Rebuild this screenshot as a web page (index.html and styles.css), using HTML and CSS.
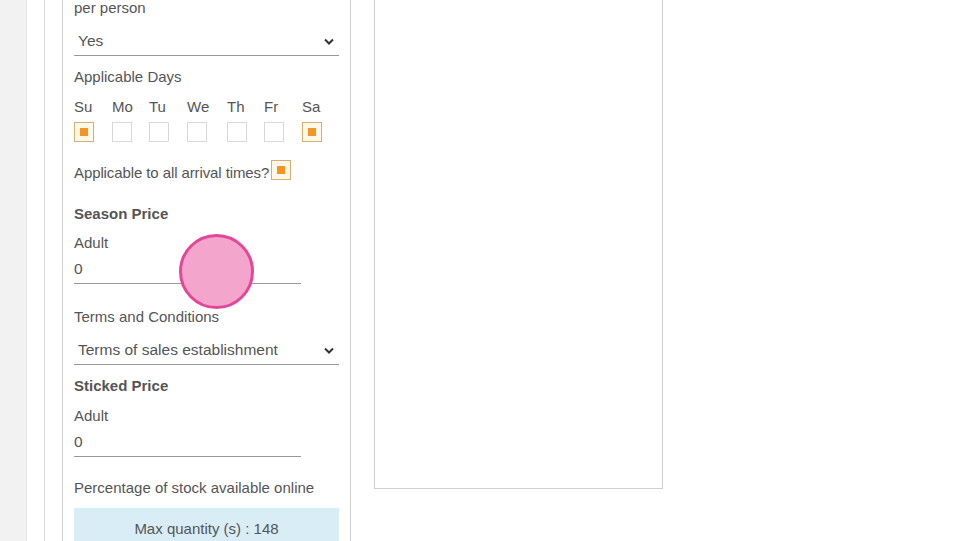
FILE: index.html
```html
<!DOCTYPE html>
<html lang="en">
<head>
    <meta charset="UTF-8" />
    <title>Season price</title>
    <link rel="stylesheet" href="styles.css">
</head>
<body>
    <div class="rail"></div>
    <div class="main">
        <div class="panel">
            <div class="field">
                <label class="lbl">per person</label>
                <div class="select">
                    <span>Yes</span>
                    <svg class="chev" width="10" height="7" viewBox="0 0 10 7"><path d="M1 1.5 L5 5.5 L9 1.5" fill="none" stroke="#333" stroke-width="2"/></svg>
                </div>
            </div>

            <div class="field">
                <label class="lbl lbl-days">Applicable Days</label>
                <div class="days">
                    <span class="day">Su</span>
                    <span class="day">Mo</span>
                    <span class="day">Tu</span>
                    <span class="day">We</span>
                    <span class="day">Th</span>
                    <span class="day">Fr</span>
                    <span class="day">Sa</span>
                    <span class="box checked"></span>
                    <span class="box"></span>
                    <span class="box"></span>
                    <span class="box"></span>
                    <span class="box"></span>
                    <span class="box"></span>
                    <span class="box checked"></span>
                </div>
            </div>

            <div class="arrival">
                <span>Applicable to all arrival times?</span>
                <span class="box checked"></span>
            </div>

            <h4 class="title">Season Price</h4>
            <div class="field">
                <label class="lbl">Adult</label>
                <div class="input">0</div>
            </div>

            <div class="field">
                <label class="lbl">Terms and Conditions</label>
                <div class="select">
                    <span>Terms of sales establishment</span>
                    <svg class="chev" width="10" height="7" viewBox="0 0 10 7"><path d="M1 1.5 L5 5.5 L9 1.5" fill="none" stroke="#333" stroke-width="2"/></svg>
                </div>
            </div>

            <h4 class="title title-tight">Sticked Price</h4>
            <div class="field">
                <label class="lbl">Adult</label>
                <div class="input input-last">0</div>
            </div>

            <div class="field">
                <label class="lbl lbl-stock">Percentage of stock available online</label>
                <div class="info">Max quantity (s) : 148</div>
            </div>
        </div>
        <div class="preview"></div>
    </div>
    <div class="touch"></div>
</body>
</html>
```

FILE: styles.css
```css
* {
    box-sizing: border-box;
}

body {
    margin: 0;
    font-family: "Liberation Sans", Arial, sans-serif;
    font-size: 15px;
    color: #555;
    background: #fff;
    display: flex;
    height: 541px;
    overflow: hidden;
}

.rail {
    width: 27px;
    flex: none;
    background: #f2f2f2;
    border-right: 1px solid #e6e6e6;
}

.main {
    margin-left: 17px;
    border-left: 1px solid #dcdcdc;
    padding-left: 17px;
    display: flex;
    align-items: flex-start;
    gap: 23px;
}

.panel {
    width: 289px;
    margin-top: -1px;
    border-left: 1px solid #d0d0d0;
    border-right: 1px solid #d0d0d0;
    padding: 0 11px 20px 11px;
}

.field {
    display: flex;
    flex-direction: column;
}

.lbl {
    display: block;
    line-height: 17px;
    margin-bottom: 7px;
}

.lbl-days {
    margin-bottom: 13px;
}

.select {
    display: flex;
    justify-content: space-between;
    align-items: center;
    height: 33px;
    padding: 4px 5px 0 4px;
    border-bottom: 1px solid #999;
    font-size: 15.5px;
    margin-bottom: 12px;
}

.chev {
    display: block;
}

.days {
    display: grid;
    grid-template-columns: 38px 37px 38px 40px 37px 38px 38px;
    row-gap: 7px;
    margin-bottom: 18px;
}

.day {
    line-height: 17px;
}

.box {
    display: block;
    width: 20px;
    height: 20px;
    border: 1px solid #d8d8d8;
    background: #fff;
}

.box.checked {
    border-color: #d6b070;
    background: #fff7e8;
    position: relative;
}

.box.checked::after {
    content: "";
    position: absolute;
    left: 5px;
    top: 5px;
    width: 8px;
    height: 8px;
    background: #f39423;
}

.arrival {
    display: flex;
    align-items: flex-start;
    gap: 2px;
    line-height: 17px;
    padding-top: 4px;
    letter-spacing: -0.1px;
}

.arrival .box {
    margin-top: -4px;
}

.title {
    margin: 24px 0 12px;
    font-size: 15px;
    font-weight: bold;
    line-height: 17px;
}

.title-tight {
    margin-top: 0;
    margin-bottom: 13px;
}

.input {
    width: 227px;
    height: 26px;
    line-height: 20px;
    border-bottom: 1px solid #999;
    font-size: 15.5px;
    padding-top: 1px;
    margin-bottom: 24px;
}

.input-last {
    margin-bottom: 21px;
}

.lbl-stock {
    margin-top: 1px;
    margin-bottom: 12px;
}

.info {
    background: #d9edf7;
    text-align: center;
    line-height: 17px;
    padding: 12px 0 10px;
    color: #555;
}

.preview {
    width: 289px;
    height: 489px;
    border: 1px solid #cfcfcf;
    border-top: none;
}

.touch {
    position: absolute;
    left: 179px;
    top: 234px;
    width: 75px;
    height: 75px;
    border-radius: 50%;
    background: #f4a5cc;
    border: 3px solid #e2479a;
}
```
